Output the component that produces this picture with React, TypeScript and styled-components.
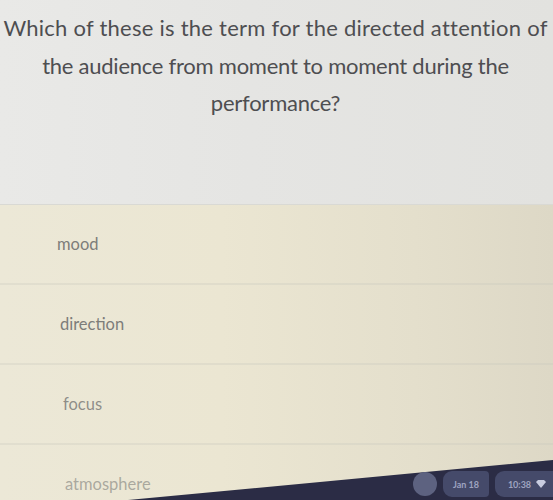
import React from "react";
import styled, { createGlobalStyle } from "styled-components";

const Global = createGlobalStyle`
  html, body { margin: 0; padding: 0; }
  body { width: 553px; height: 500px; overflow: hidden; font-family: Lato, "Open Sans", sans-serif; }
`;

const Page = styled.div`
  position: relative;
  width: 553px;
  height: 500px;
  overflow: hidden;
  display: flex;
  flex-direction: column;
  background: #e8e4d4;
`;

const QuestionPanel = styled.section`
  flex: 0 0 205px;
  box-sizing: border-box;
  padding: 9px 0 0 0;
  background: linear-gradient(90deg, #e9e9e7 0%, #e5e5e3 45%, #e2e2df 100%);
  border-bottom: 1px solid #d9d9d4;
`;

const QuestionText = styled.h1`
  margin: 0;
  width: 551px;
  white-space: nowrap;
  text-align: center;
  font-family: Lato, "Open Sans", sans-serif;
  font-weight: 400;
  font-size: 22px;
  line-height: 37.5px;
  color: #4e4e51;
  letter-spacing: -0.25px;
`;

const WideLine = styled.span`
  letter-spacing: 0.25px;
`;

const OptionList = styled.div`
  display: flex;
  flex-direction: column;
  flex: 0 0 auto;
  background: linear-gradient(90deg, #ece8d7 0%, #ebe6d2 40%, #e4dfcc 75%, #ddd8c6 100%);
`;

const Option = styled.div<{ $indent: number; $fade: number }>`
  height: 80px;
  box-sizing: border-box;
  display: flex;
  align-items: center;
  padding-left: ${(p) => p.$indent}px;
  border-bottom: 2px solid rgba(200, 200, 190, 0.3);
  font-family: Lato, "Open Sans", sans-serif;
  font-size: 16.5px;
  color: ${(p) => `rgba(125, 125, 122, ${p.$fade})`};
`;

const Taskbar = styled.div`
  position: absolute;
  right: 0;
  bottom: 0;
  width: 425px;
  height: 40px;
  background: #2b2c45;
  clip-path: polygon(0 100%, 100% 0, 100% 100%);
`;

const TrayArea = styled.div`
  position: absolute;
  right: -6px;
  bottom: 0;
  height: 32px;
  display: flex;
  align-items: center;
  gap: 6px;
`;

const TrayCircle = styled.div`
  width: 24px;
  height: 24px;
  border-radius: 50%;
  background: #5d6280;
`;

const TrayPill = styled.div<{ $w: number }>`
  width: ${(p) => p.$w}px;
  height: 26px;
  border-radius: 9px 4px 4px 9px;
  background: #454a6a;
  color: #9ea3c0;
  font-family: Lato, sans-serif;
  font-size: 9px;
  font-weight: 700;
  display: flex;
  align-items: center;
  justify-content: center;
  gap: 5px;
`;

export default function App() {
  return (
    <Page>
      <Global />
      <QuestionPanel>
        <QuestionText>
          <WideLine>Which of these is the term for the directed attention of</WideLine>
          <br />
          the audience from moment to moment during the
          <br />
          performance?
        </QuestionText>
      </QuestionPanel>
      <OptionList>
        <Option $indent={57} $fade={1}>mood</Option>
        <Option $indent={60} $fade={1}>direction</Option>
        <Option $indent={63} $fade={0.85}>focus</Option>
        <Option $indent={65} $fade={0.6}>atmosphere</Option>
      </OptionList>
      <Taskbar />
      <TrayArea>
        <TrayCircle />
        <TrayPill $w={46}>Jan 18</TrayPill>
        <TrayPill $w={64}>
          10:38
          <svg width="10" height="8" viewBox="0 0 10 8">
            <path d="M0 2 L5 8 L10 2 L8 0 L2 0 Z" fill="#c8cce0" />
          </svg>
        </TrayPill>
      </TrayArea>
    </Page>
  );
}
